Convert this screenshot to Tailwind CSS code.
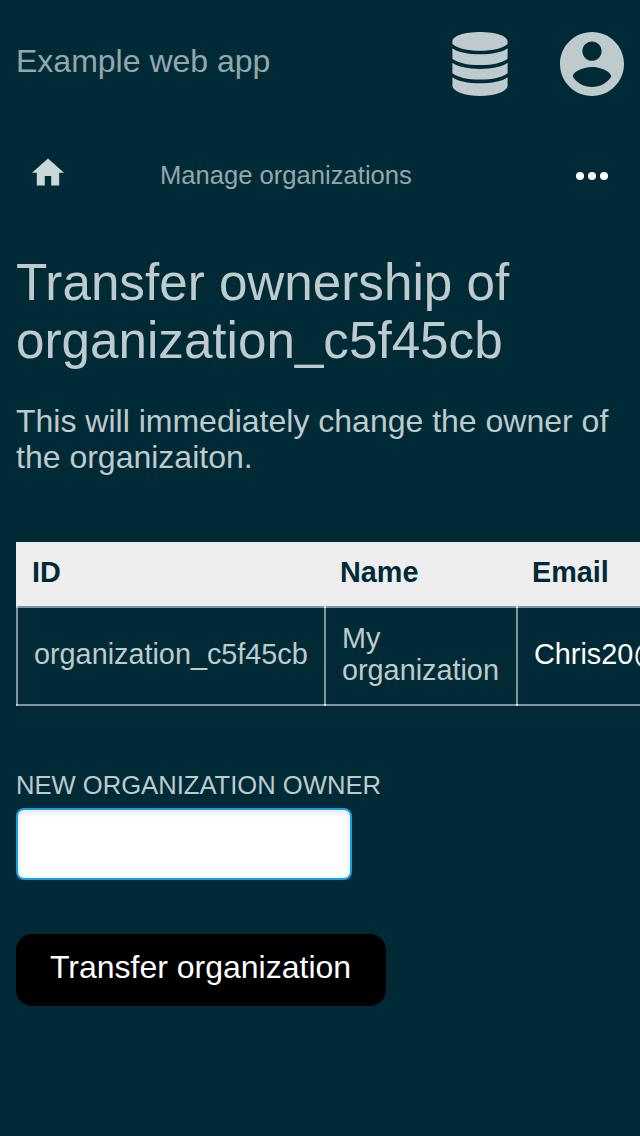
<!DOCTYPE html>
<html lang="en">
<head>
<meta charset="utf-8">
<title>Example web app</title>
<script src="https://cdn.jsdelivr.net/npm/@tailwindcss/browser@4"></script>
</head>
<body class="h-[1136px] overflow-hidden bg-[#002b36] font-['Liberation_Sans',sans-serif] text-[32px] leading-9 text-[#bfcacd]">
<header class="flex h-32 items-center justify-between px-4">
  <div class="mb-1.5 text-[#94a7ab]">Example web app</div>
  <div class="flex items-center gap-[52px]">
    <svg class="h-16 w-14" viewBox="0 0 56 64" fill="currentColor"><path d="M.4 9.500C.4 4 12.500 0 28 0S55.600 4 55.600 9.500V12C51 16.300 41 18.800 28 18.800S5 16.300.4 12zM.4 16.200C6 20.200 16 22.200 28 22.200S50 20.200 55.600 16.200V26.700C50 30.900 41 33 28 33S6 30.900.4 26.700zM.4 30.800C6 34.900 16 36.900 28 36.900S50 34.900 55.600 30.800V41.200C50 45.400 41 47.500 28 47.500S6 45.400.4 41.200zM.4 45.200C6 49.200 16 51.200 28 51.200S50 49.200 55.600 45.200V54.500C54 60 42 64 28 64S2 60 .4 54.500z"/></svg>
    <svg class="h-16 w-16" viewBox="2 2 20 20" fill="currentColor"><path d="M12 2C6.480 2 2 6.480 2 12s4.480 10 10 10 10-4.480 10-10S17.520 2 12 2zm0 3c1.660 0 3 1.340 3 3s-1.340 3-3 3-3-1.340-3-3 1.340-3 3-3zm0 14.200c-2.500 0-4.710-1.280-6-3.220.030-1.990 4-3.080 6-3.080 1.990 0 5.970 1.090 6 3.080-1.290 1.940-3.500 3.220-6 3.220z"/></svg>
  </div>
</header>
<nav class="flex h-24 items-center px-4 text-[25.6px] text-[#94a7ab]">
  <svg class="mb-2 ml-4 h-7 w-8 text-[#ccd5d7]" viewBox="2 3 20 17" fill="currentColor"><path d="M10 20v-6h4v6h5v-8h3L12 3 2 12h3v8z"/></svg>
  <span class="mb-0.5 ml-24">Manage organizations</span>
  <svg class="mr-4 ml-auto h-2 w-8 text-white" viewBox="0 0 32 8" fill="currentColor"><circle cx="4" cy="4" r="4"/><circle cx="16" cy="4" r="4"/><circle cx="28" cy="4" r="4"/></svg>
</nav>
<main class="px-4 pt-[30px]">
  <h1 class="text-[51.2px] leading-[58px]">Transfer ownership of organization_c5f45cb</h1>
  <p class="mt-[33px]">This will immediately change the owner of the organizaiton.</p>
  <div class="mt-[67px] -mr-4 overflow-hidden">
    <table class="block w-[800px] text-left text-[28.8px] leading-8">
      <thead class="block bg-[#eee] text-[#002b36]"><tr class="grid h-16 grid-cols-[308px_192px_300px] items-center pb-1"><th class="px-4">ID</th><th class="px-4">Name</th><th class="px-4">Email</th></tr></thead>
      <tbody class="block"><tr class="grid h-[100px] grid-cols-[308px_192px_300px] border-y-2 border-white/50">
        <td class="-my-0.5 flex items-center border-l-2 border-white/50 px-4 pb-1">organization_c5f45cb</td>
        <td class="relative -my-0.5 flex items-center border-l-2 border-white/50 px-4 pb-1 before:absolute before:top-0 before:-left-0.5 before:size-0.5 before:bg-white/50 after:absolute after:bottom-0 after:-left-0.5 after:size-0.5 after:bg-white/50">My<br>organization</td>
        <td class="relative -my-0.5 flex items-center border-l-2 border-white/50 px-4 pb-1 text-white before:absolute before:top-0 before:-left-0.5 before:size-0.5 before:bg-white/50 after:absolute after:bottom-0 after:-left-0.5 after:size-0.5 after:bg-white/50">Chris20@example.com</td>
      </tr></tbody>
    </table>
  </div>
  <label for="owner" class="mt-[61px] block text-[25.6px] uppercase">New organization owner</label>
  <input id="owner" class="mt-[5px] block h-[72px] w-[336px] rounded-lg border-2 border-[#129fea] bg-white px-3 text-black shadow-[inset_0_2px_6px_rgba(0,0,0,0.12)] outline-none">
  <button class="mt-[54px] block h-[72px] w-[370px] rounded-2xl bg-black pr-px pb-1.5 text-white">Transfer organization</button>
</main>
</body>
</html>
